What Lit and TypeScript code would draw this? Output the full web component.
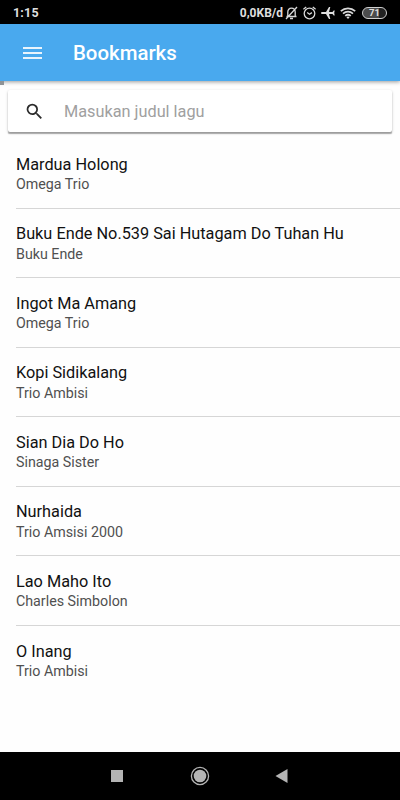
import { LitElement, html, css } from "lit";
import { customElement } from "lit/decorators.js";

interface Song {
  title: string;
  artist: string;
}

const SONGS: Song[] = [
  { title: "Mardua Holong", artist: "Omega Trio" },
  { title: "Buku Ende No.539 Sai Hutagam Do Tuhan Hu", artist: "Buku Ende" },
  { title: "Ingot Ma Amang", artist: "Omega Trio" },
  { title: "Kopi Sidikalang", artist: "Trio Ambisi" },
  { title: "Sian Dia Do Ho", artist: "Sinaga Sister" },
  { title: "Nurhaida", artist: "Trio Amsisi 2000" },
  { title: "Lao Maho Ito", artist: "Charles Simbolon" },
  { title: "O Inang", artist: "Trio Ambisi" },
];

@customElement("status-bar")
class StatusBar extends LitElement {
  static styles = css`
    :host {
      display: flex;
      flex: none;
      align-items: center;
      height: 24px;
      box-sizing: border-box;
      padding: 1px 13px 0 13px;
      background: #000;
      color: #dedede;
      font-weight: 700;
    }
    .time { flex: 1; font-size: 12.5px; letter-spacing: 0.2px; }
    .speed { font-size: 12px; margin-right: 2px; }
    svg { display: block; flex: none; }
    .bell { margin-right: 5px; }
    .alarm { margin-right: 5px; }
    .plane { margin-right: 5px; }
    .wifi { margin-right: 6px; }
    .battery {
      box-sizing: border-box;
      width: 25px;
      height: 12px;
      border: 1.5px solid #d0d0d0;
      border-radius: 6px;
      background: linear-gradient(90deg, #4c4c4c 0 16px, #222 16px);
      font-size: 9.5px;
      line-height: 10px;
      text-align: center;
    }
  `;
  render() {
    return html`
      <span class="time">1:15</span>
      <span class="speed">0,0KB/d</span>
      <svg class="bell" width="13" height="14" viewBox="0 0 13 14" fill="none" stroke="#d8d8d8" stroke-width="1.3">
        <path d="M1.5 10.5h10M2.8 10.2V6C2.8 3.7 4.2 2.2 6.5 2.2S10.2 3.7 10.2 6v4.2M5 12.5h3M12 1L1 13"/>
      </svg>
      <svg class="alarm" width="13" height="14" viewBox="0 0 13 14" fill="none" stroke="#d8d8d8" stroke-width="1.3">
        <circle cx="6.5" cy="7.5" r="5.3"/>
        <path d="M.4 3.3L3.2.9M12.6 3.3L9.8.9M4.2 6.6l2.3 1.7 2.4-1.7"/>
      </svg>
      <svg class="plane" width="14" height="14" viewBox="0 0 14 14" fill="#e0e0e0">
        <path d="M0 7c0-.6.4-.9 1-.9h4L8 1h1.3L8 6.1h3.5L12.7 4.500h1L13.200 7l.5 2.500h-1L11.500 7.900H8L9.300 13H8L5 7.900H1C.4 7.900 0 7.600 0 7z"/>
      </svg>
      <svg class="wifi" width="16" height="14" viewBox="0 0 16 14" fill="none" stroke="#d8d8d8" stroke-width="1.7">
        <path d="M.8 5.2C4.900 1.300 11.100 1.300 15.200 5.200M3 7.600C5.900 5 10.100 5 13 7.600M5.200 9.900C6.900 8.500 9.100 8.500 10.800 9.900"/>
        <path d="M6.300 11.100Q8 9.900 9.700 11.100L8 13z" fill="#d8d8d8" stroke="none"/>
      </svg>
      <span class="battery">71</span>
    `;
  }
}

@customElement("search-card")
class SearchCard extends LitElement {
  static styles = css`
    :host {
      display: flex;
      flex: none;
      align-items: center;
      height: 42px;
      margin: 9px 8px 0;
      background: #fff;
      border-radius: 2px;
      box-shadow: 0 2px 1px -0.5px rgba(0, 0, 0, 0.28), 0 1px 3px rgba(0, 0, 0, 0.22);
    }
    svg { display: block; margin-left: 16px; }
    .hint { margin-left: 19px; font-size: 16.3px; color: #a0a0a0; }
  `;
  render() {
    return html`
      <svg width="21" height="21" viewBox="0 0 24 24" fill="#2b2b2b">
        <path d="M15.5 14h-.79l-.28-.27A6.471 6.471 0 0 0 16 9.5 6.5 6.5 0 1 0 9.5 16c1.61 0 3.09-.59 4.23-1.57l.27.28v.79l5 4.99L20.49 19l-4.99-5zm-6 0C7.01 14 5 11.99 5 9.5S7.01 5 9.5 5 14 7.01 14 9.5 11.99 14 9.5 14z"/>
      </svg>
      <span class="hint">Masukan judul lagu</span>
    `;
  }
}

@customElement("nav-bar")
class NavBar extends LitElement {
  static styles = css`
    :host {
      display: flex;
      flex: none;
      justify-content: center;
      align-items: center;
      gap: 63px;
      height: 48px;
      background: #000;
    }
    svg { display: block; }
  `;
  render() {
    return html`
      <svg width="20" height="20" viewBox="0 0 20 20"><path d="M4 4h12v12H4z" fill="#b4b4b4"/></svg>
      <svg width="20" height="20" viewBox="0 0 20 20">
        <circle cx="10" cy="10" r="8.6" fill="none" stroke="#b4b4b4" stroke-width="1.3"/>
        <circle cx="10" cy="10" r="6.3" fill="#b4b4b4"/>
      </svg>
      <svg width="20" height="20" viewBox="0 0 20 20"><path d="M2.500 10L14.500 3v14z" fill="#b4b4b4"/></svg>
    `;
  }
}

@customElement("app-root")
class AppRoot extends LitElement {
  static styles = css`
    :host {
      display: flex;
      flex-direction: column;
      width: 400px;
      height: 800px;
      overflow: hidden;
      background: #fefefe;
      font-family: Roboto, sans-serif;
      white-space: nowrap;
    }
    .appbar {
      flex: none;
      display: flex;
      align-items: center;
      height: 57px;
      background: #49a9ee;
      box-shadow: 0 1px 4px rgba(0, 0, 0, 0.4);
      color: #fff;
    }
    .appbar svg { display: block; margin-left: 23px; }
    .appbar h1 { margin: 0 0 0 31px; font-size: 20.4px; font-weight: 500; }
    .body { flex: 1; position: relative; display: flex; flex-direction: column; }
    .marker { position: absolute; left: 0; top: 0; width: 4px; height: 4px; background: #8f9396; }
    .list { list-style: none; margin: 7px 0 0; padding: 0 0 0 16px; }
    .row {
      box-sizing: border-box;
      height: 69.57px;
      padding-top: 14.6px;
      border-bottom: 1px solid #d6d6d6;
    }
    .row:last-child { border-bottom: 0; }
    .title { font-size: 16.3px; line-height: 22px; color: #111; }
    .artist { margin-top: -0.6px; font-size: 14.25px; line-height: 18px; color: #505050; }
  `;
  render() {
    return html`
      <status-bar></status-bar>
      <header class="appbar">
        <svg width="19" height="14" viewBox="0 0 19 14" fill="#e9f4fc">
          <path d="M0 1h19v2H0zM0 6h19v2H0zM0 11h19v2H0z"/>
        </svg>
        <h1>Bookmarks</h1>
      </header>
      <main class="body">
        <div class="marker"></div>
        <search-card></search-card>
        <ul class="list">
          ${SONGS.map(
            (s) => html`<li class="row">
              <div class="title">${s.title}</div>
              <div class="artist">${s.artist}</div>
            </li>`
          )}
        </ul>
      </main>
      <nav-bar></nav-bar>
    `;
  }
}
